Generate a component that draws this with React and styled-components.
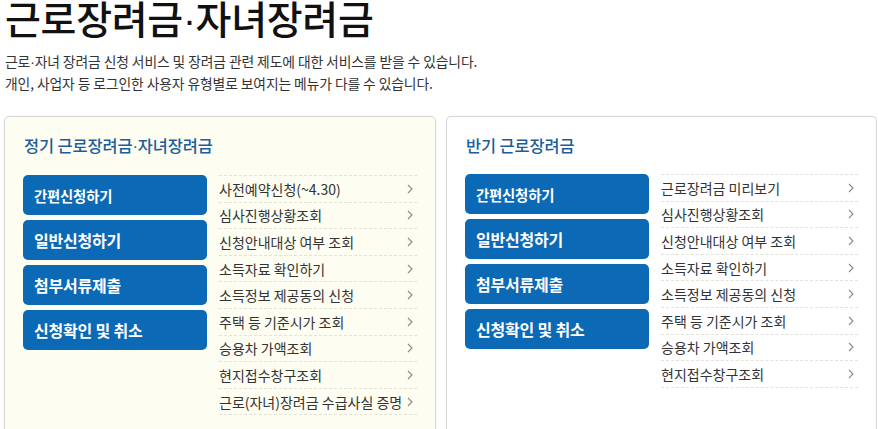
import React from "react";
import styled, { createGlobalStyle } from "styled-components";

const GlobalStyle = createGlobalStyle`
    body {
        margin: 0;
        background: #fff;
        font-family: "Noto Sans CJK KR", "Noto Sans", sans-serif;
        color: #333;
    }
`;

const panels = [
    {
        title: "정기 근로장려금·자녀장려금",
        tone: "cream",
        buttons: ["간편신청하기", "일반신청하기", "첨부서류제출", "신청확인 및 취소"],
        links: [
            "사전예약신청(~4.30)",
            "심사진행상황조회",
            "신청안내대상 여부 조회",
            "소득자료 확인하기",
            "소득정보 제공동의 신청",
            "주택 등 기준시가 조회",
            "승용차 가액조회",
            "현지접수창구조회",
            "근로(자녀)장려금 수급사실 증명",
        ],
    },
    {
        title: "반기 근로장려금",
        tone: "white",
        buttons: ["간편신청하기", "일반신청하기", "첨부서류제출", "신청확인 및 취소"],
        links: [
            "근로장려금 미리보기",
            "심사진행상황조회",
            "신청안내대상 여부 조회",
            "소득자료 확인하기",
            "소득정보 제공동의 신청",
            "주택 등 기준시가 조회",
            "승용차 가액조회",
            "현지접수창구조회",
        ],
    },
];

// CJK fonts draw "·" full width; swap it for a narrow Latin dot
const withDot = (text) =>
    text.split("·").flatMap((part, i) => (i === 0 ? [part] : [<Dot key={i}>·</Dot>, part]));

const Chevron = () => (
    <svg width="6" height="10" viewBox="0 0 6 10">
        <path d="M1 1 L5 5 L1 9" fill="none" stroke="#8a8a8a" strokeWidth="1.1" />
    </svg>
);

const App = () => {
    return (
        <>
            <GlobalStyle />
            <Page>
                <Header>
                    <Title>{withDot("근로장려금·자녀장려금")}</Title>
                    <Desc>
                        {withDot("근로·자녀 장려금 신청 서비스 및 장려금 관련 제도에 대한 서비스를 받을 수 있습니다.")}
                        <br />
                        개인, 사업자 등 로그인한 사용자 유형별로 보여지는 메뉴가 다를 수 있습니다.
                    </Desc>
                </Header>
                <Panels>
                    {panels.map((p) => (
                        <Panel key={p.title} $tone={p.tone}>
                            <PanelTitle>{withDot(p.title)}</PanelTitle>
                            <PanelBody>
                                <Buttons>
                                    {p.buttons.map((b, i) => (
                                        <BlueButton key={b} $small={i === 0}>{b}</BlueButton>
                                    ))}
                                </Buttons>
                                <LinkList>
                                    {p.links.map((l) => (
                                        <LinkRow key={l}>
                                            <span>{l}</span>
                                            <Chevron />
                                        </LinkRow>
                                    ))}
                                </LinkList>
                            </PanelBody>
                        </Panel>
                    ))}
                </Panels>
            </Page>
        </>
    );
};

const Page = styled.div`
    padding: 0 2px 0 4px;
`;

const Header = styled.div`
    padding-left: 1px;
`;

const Dot = styled.span`
    font-family: "Liberation Sans", sans-serif;
`;

const Title = styled.h1`
    margin: 0;
    font-size: 39px;
    line-height: 34px;
    font-weight: 500;
    color: #111;
    letter-spacing: -0.3px;
`;

const Desc = styled.p`
    margin: 13px 0 0;
    font-size: 13.8px;
    line-height: 21px;
    color: #333;
    letter-spacing: -0.1px;
`;

const Panels = styled.div`
    display: grid;
    grid-template-columns: 432px 431px;
    gap: 10px;
    margin-top: 22px;
`;

const Panel = styled.section`
    min-height: 340px;
    border: 1px solid #d6d6d6;
    border-radius: 5px;
    background: ${(p) => (p.$tone === "cream" ? "#fdfdf1" : "#fff")};
    padding: 16px 18px 20px 18px;
    box-shadow: 0 0 2px rgba(0, 0, 0, 0.06);
`;

const PanelTitle = styled.h2`
    margin: 0 0 0 1px;
    font-size: 16.4px;
    line-height: 24px;
    font-weight: 500;
    color: #1d5d9b;
    letter-spacing: -0.1px;
`;

const PanelBody = styled.div`
    display: flex;
    gap: 12px;
    margin-top: 17px;
`;

const Buttons = styled.div`
    display: flex;
    flex-direction: column;
    gap: 5px;
    width: 184px;
    flex-shrink: 0;
`;

const BlueButton = styled.div`
    height: 40px;
    border-radius: 5px;
    background: #0b69b5;
    color: #fff;
    display: flex;
    align-items: center;
    padding-left: 11px;
    font-size: ${(p) => (p.$small ? "14.4px" : "16px")};
    font-weight: 700;
    letter-spacing: -0.2px;
`;

const LinkList = styled.ul`
    list-style: none;
    margin: 0;
    padding: 0;
    flex: 1;
    border-top: 1px dashed #e2e2d8;
`;

const LinkRow = styled.li`
    height: 26.6px;
    box-sizing: border-box;
    border-bottom: 1px dashed #e2e2d8;
    display: flex;
    align-items: center;
    justify-content: space-between;
    padding-right: 4px;
    font-size: 14px;
    color: #333;
    white-space: nowrap;
`;

export default App;
